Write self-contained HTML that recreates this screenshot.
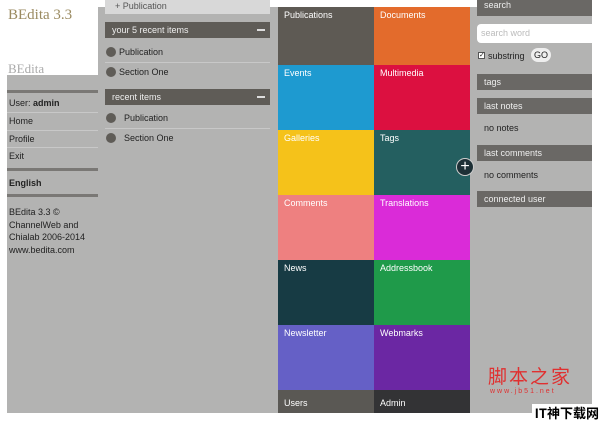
<!DOCTYPE html>
<html><head><meta charset="utf-8"><style>
*{margin:0;padding:0;box-sizing:border-box}
body{width:600px;height:422px;background:#fff;position:relative;overflow:hidden;font-family:"Liberation Sans",sans-serif;font-size:9px;color:#222}
.main{position:absolute;left:7px;top:7px;width:585px;height:406px;background:#b3b3b2}
.a{position:absolute}
.logo{left:7px;top:7px;width:91px;height:68px;background:#fff}
.sep{position:absolute;left:7px;width:91px;height:3px;background:#7a7875}
.lnk{position:absolute;left:9px;font-size:9px}
.hl{position:absolute;left:7px;width:91px;height:1px;background:#c8c8c8}
.hdr{position:absolute;left:105px;width:165px;height:16px;background:#5f5c57;color:#eee;padding:3px 7px;font-size:9px}
.hdr b{position:absolute;right:5px;top:7px;width:8px;height:2px;background:#ddd}
.dot{position:absolute;width:10px;height:10px;border-radius:50%;background:#5f5c57}
.it{position:absolute;font-size:9px}
.t{position:absolute;width:96px;height:65px;color:#fff;padding:3px 6px;font-size:9px}
.rh{position:absolute;left:477px;width:115px;height:16px;background:#6a6865;color:#eee;padding:3px 7px;font-size:9px}
</style></head><body>
<div class="main"></div>
<div class="a logo"><div style="position:absolute;left:1px;top:0px;font-family:'Liberation Serif',serif;font-size:15px;color:#9a8a60">BEdita 3.3</div><div style="position:absolute;left:1px;top:54px;font-family:'Liberation Serif',serif;font-size:13px;color:#aaa">BEdita</div></div>
<div class="sep" style="top:90px"></div>
<div class="lnk" style="top:98px">User: <b>admin</b></div>
<div class="hl" style="top:112px"></div>
<div class="lnk" style="top:116px">Home</div>
<div class="hl" style="top:130px"></div>
<div class="lnk" style="top:134px">Profile</div>
<div class="hl" style="top:147px"></div>
<div class="lnk" style="top:151px">Exit</div>
<div class="sep" style="top:168px"></div>
<div class="lnk" style="top:178px"><b>English</b></div>
<div class="sep" style="top:194px"></div>
<div class="lnk" style="top:206px;line-height:12.5px">BEdita 3.3 ©<br>ChannelWeb and<br>Chialab 2006-2014<br>www.bedita.com</div>

<div class="a" style="left:105px;top:0;width:165px;height:14px;background:#d8d8d8;color:#555;padding:1px 10px;font-size:9px">+ Publication</div>
<div class="hdr" style="top:22px">your 5 recent items<b></b></div>
<div class="dot" style="left:106px;top:47px"></div><div class="it" style="left:119px;top:47px">Publication</div>
<div class="a" style="left:105px;top:62px;width:165px;height:1px;background:#c8c8c8"></div>
<div class="dot" style="left:106px;top:67px"></div><div class="it" style="left:119px;top:67px">Section One</div>
<div class="hdr" style="top:89px">recent items<b></b></div>
<div class="dot" style="left:106px;top:113px"></div><div class="it" style="left:124px;top:113px">Publication</div>
<div class="a" style="left:105px;top:128px;width:165px;height:1px;background:#c8c8c8"></div>
<div class="dot" style="left:106px;top:133px"></div><div class="it" style="left:124px;top:133px">Section One</div>

<div class="t" style="left:278px;top:7px;height:58px;background:#5e5a54">Publications</div>
<div class="t" style="left:374px;top:7px;height:58px;background:#e36b2c">Documents</div>
<div class="t" style="left:278px;top:65px;background:#1e9ad0">Events</div>
<div class="t" style="left:374px;top:65px;background:#dc1040">Multimedia</div>
<div class="t" style="left:278px;top:130px;background:#f5c21a">Galleries</div>
<div class="t" style="left:374px;top:130px;background:#245f60">Tags</div>
<div class="t" style="left:278px;top:195px;background:#ee8080">Comments</div>
<div class="t" style="left:374px;top:195px;background:#da2bd8">Translations</div>
<div class="t" style="left:278px;top:260px;background:#173b44">News</div>
<div class="t" style="left:374px;top:260px;background:#1f9a4a">Addressbook</div>
<div class="t" style="left:278px;top:325px;background:#6560c6">Newsletter</div>
<div class="t" style="left:374px;top:325px;background:#6b27a3">Webmarks</div>
<div class="t" style="left:278px;top:390px;height:23px;background:#5a5854;padding-top:8px">Users</div>
<div class="t" style="left:374px;top:390px;height:23px;background:#333335;padding-top:8px">Admin</div>
<div class="a" style="left:456px;top:158px;width:18px;height:18px;border-radius:50%;background:#1d3036;border:1px solid #ccc;color:#fff;font-size:16px;line-height:15px;text-align:center">+</div>

<div class="rh" style="top:0;height:16px;padding-top:0">search</div>
<div class="a" style="left:477px;top:24px;width:115px;height:19px;background:#fff;border-radius:4px 0 0 4px;color:#bbb;padding:4px 4px;font-size:9px">search word</div>
<div class="a" style="left:478px;top:52px;width:7px;height:7px;background:#fff;border:1px solid #555;font-size:7px;line-height:5px;text-align:center">✓</div>
<div class="it" style="left:488px;top:51px">substring</div>
<div class="a" style="left:531px;top:48px;width:20px;height:14px;background:#eee;border-radius:7px;font-size:9px;text-align:center;padding-top:2px">GO</div>
<div class="rh" style="top:74px">tags</div>
<div class="rh" style="top:98px">last notes</div>
<div class="it" style="left:484px;top:123px">no notes</div>
<div class="rh" style="top:145px">last comments</div>
<div class="it" style="left:484px;top:170px">no comments</div>
<div class="rh" style="top:191px">connected user</div>

<div class="a" style="left:488px;top:366px;color:#e03030;font-family:'Noto Sans CJK SC',sans-serif;font-size:19px;letter-spacing:2px;line-height:20px">脚本之家</div>
<div class="a" style="left:490px;top:388px;color:#e03030;font-size:7px;letter-spacing:2px">www.jb51.net</div>
<div class="a" style="left:532px;top:404px;width:68px;height:18px;color:#000;font-family:'Noto Sans CJK SC',sans-serif;font-size:13px;font-weight:bold;line-height:18px;background:#fff;white-space:nowrap;text-align:right;padding-right:1px">IT神下载网</div>
</body></html>
